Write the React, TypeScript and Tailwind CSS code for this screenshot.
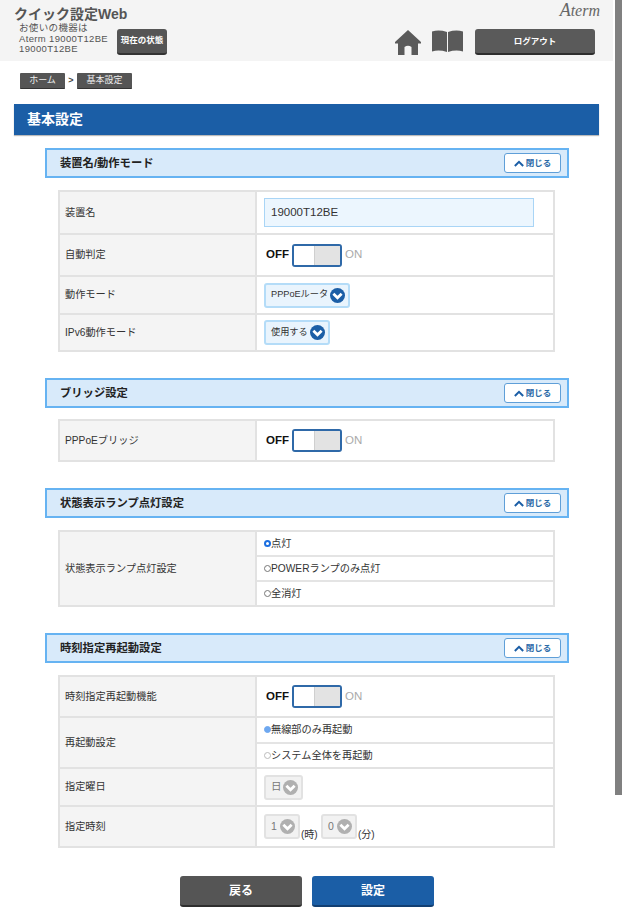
import type { ReactNode } from 'react';

function Chevron({ disabled = false }: { disabled?: boolean }) {
  return (
    <svg viewBox="0 0 16 16" className="w-[15px] h-[15px] shrink-0">
      <circle cx="8" cy="8" r="8" fill={disabled ? '#b0b0b0' : '#1b5ea6'} />
      <path d="M3.6 6.2 L8 10.4 L12.4 6.2" fill="none" stroke="#fff" strokeWidth="3" />
    </svg>
  );
}

function Select({ label, disabled = false, width }: { label: string; disabled?: boolean; width: string }) {
  return (
    <div
      className={`h-[25px] ${width} flex items-center justify-between pl-[5px] pr-[3px] rounded-[3px] border-2 whitespace-nowrap ${
        disabled ? 'bg-[#f2f2f2] border-[#e2e2e2] text-[10.5px] text-[#777]' : 'bg-[#e9f4fd] border-[#b4dcf8] text-[9.2px] text-[#333]'
      }`}
    >
      <span>{label}</span>
      <Chevron disabled={disabled} />
    </div>
  );
}

function Toggle() {
  return (
    <div className="flex items-center pl-[9px]">
      <span className="w-[26px] text-[11.5px] font-bold text-[#111]">OFF</span>
      <div className="w-[50px] h-[23px] flex rounded-[3px] border-2 border-[#2f69a8] overflow-hidden">
        <div className="w-[20px] bg-white" />
        <div className="flex-1 bg-[#e3e3e3] border-l border-[#cfcfcf]" />
      </div>
      <span className="ml-[3px] text-[11.5px] font-medium text-[#aaaaaa]">ON</span>
    </div>
  );
}

function Radio({ label, state }: { label: string; state: 'on' | 'off' | 'dimOn' | 'dimOff' }) {
  const dot = {
    on: 'bg-[#fff] border-[2.5px] border-[#1c6fe0]',
    off: 'bg-white border border-[#777]',
    dimOn: 'bg-[#6ea8f0] border border-[#6ea8f0]',
    dimOff: 'bg-white border border-[#bbb]',
  }[state];
  return (
    <div className="flex-1 flex items-center pl-[7px] text-[10.2px] text-[#333] border-b-2 border-[#e4e4e4] last:border-b-0">
      <span className={`w-[7px] h-[7px] rounded-full ${dot}`} />
      <span>{label}</span>
    </div>
  );
}

function Row({ label, height, children }: { label: string; height: string; children: ReactNode }) {
  return (
    <div className={`flex ${height} border-b-2 border-[#e2e2e2] last:border-b-0`}>
      <div className="w-[197px] shrink-0 flex items-center pl-[5px] bg-[#f4f4f4] border-r-2 border-[#e2e2e2] text-[10.2px] text-[#333]">
        {label}
      </div>
      <div className="flex-1 flex flex-col justify-center">{children}</div>
    </div>
  );
}

function Section({ title, gap, top, children }: { title: string; gap: string; top: string; children: ReactNode }) {
  return (
    <section className={`${top} ml-[45px] w-[524px]`}>
      <div className="h-[30px] flex items-center justify-between pl-[13px] pr-[6px] bg-[#d8eafa] border-2 border-[#66b3f2]">
        <h2 className="text-[11.3px] font-bold text-[#222]">{title}</h2>
        <div className="w-[57px] h-[20px] flex items-center justify-center gap-[2px] bg-white border border-[#5f9fd8] rounded-[3px] text-[8.5px] font-bold text-[#2b6aa8]">
          <svg viewBox="0 0 12 8" className="w-[10px] h-[7px]">
            <path d="M1 7 L6 2 L11 7" fill="none" stroke="#1b5ea6" strokeWidth="2.4" />
          </svg>
          閉じる
        </div>
      </div>
      <div className={`${gap} ml-[13px] w-[497px] border-2 border-[#e2e2e2] bg-white`}>{children}</div>
    </section>
  );
}

export default function App() {
  return (
    <div
      className="relative w-[624px] h-[912px] overflow-hidden bg-white"
      style={{ fontFamily: '"Liberation Sans", "Noto Sans CJK JP", sans-serif' }}
    >
      <div className="absolute top-0 left-[615px] w-[7px] h-[795px] bg-[#808080]" />

      <header className="w-[613px] h-[61px] bg-[#f4f4f4] flex justify-between">
        <div className="pl-[14px] pt-[5px]">
          <h1 className="text-[14px] leading-[18px] font-bold text-[#555]">クイック設定Web</h1>
          <div className="flex items-end pl-[5px]">
            <p className="w-[98px] text-[9.5px] leading-[10.5px] tracking-[0.35px] text-[#555]">
              お使いの機器は
              <br />
              Aterm 19000T12BE
              <br />
              19000T12BE
            </p>
            <div className="w-[50px] h-[26px] flex items-center justify-center rounded-[3px] bg-[#555] border-b-2 border-[#333] text-[8.5px] font-bold text-white">
              現在の状態
            </div>
          </div>
        </div>
        <div className="w-[238px] flex flex-col items-end pr-[12px]">
          <span
            className="h-[29px] pr-[1px] pt-[2px] leading-[16px] italic text-[#666]"
            style={{ fontFamily: '"Liberation Serif", serif' }}
          >
            <span className="text-[18px]">A</span>
            <span className="text-[16px]">term</span>
          </span>
          <div className="mr-[6px] flex items-center">
            <svg viewBox="0 0 26 25" className="w-[26px] h-[25px]">
              <path
                d="M13 0 L26 12 L26 13.5 L23 13.5 L23 25 L16.5 25 L16.5 17 Q13 14.5 9.5 17 L9.5 25 L3 25 L3 13.5 L0 13.5 L0 12 Z"
                fill="#5a5a5a"
              />
            </svg>
            <svg viewBox="0 0 31 24" className="ml-[11px] w-[31px] h-[24px]">
              <path d="M0 1.5 Q7 -0.5 15 2 L15 22 Q7 19.5 0 21.5 Z" fill="#5a5a5a" />
              <path d="M16 2 Q24 -0.5 31 1.5 L31 21.5 Q24 19.5 16 22 Z" fill="#5a5a5a" />
            </svg>
            <div className="ml-[12px] w-[120px] h-[26px] flex items-center justify-center rounded-[3px] bg-[#5a5a5a] border-b-2 border-[#2e2e2e] text-[8.5px] font-bold text-white">
              ログアウト
            </div>
          </div>
        </div>
      </header>

      <nav className="mt-[12px] ml-[20px] h-[16px] flex items-center text-[9px] text-[#eee]">
        <div className="w-[45px] h-[16px] flex items-center justify-center bg-[#555] border-b border-[#333] rounded-[1px]">
          ホーム
        </div>
        <span className="w-[12px] text-center font-bold text-[#444]">&gt;</span>
        <div className="w-[55px] h-[16px] flex items-center justify-center bg-[#555] border-b border-[#333] rounded-[1px]">
          基本設定
        </div>
      </nav>

      <div className="mt-[15px] ml-[14px] w-[585px] h-[31px] flex items-center pl-[13px] bg-[#1b5ea6] shadow-[0_1px_1px_#bbb] text-[14px] font-bold text-white">
        基本設定
      </div>

      <Section title="装置名/動作モード" top="mt-[13px]" gap="mt-[12px]">
        <Row label="装置名" height="h-[43px]">
          <div className="ml-[7px] w-[270px] h-[29px] flex items-center pl-[6px] bg-[#ecf6fe] border border-[#a9d5f6] text-[11.5px] text-[#333]">
            19000T12BE
          </div>
        </Row>
        <Row label="自動判定" height="h-[42px]">
          <Toggle />
        </Row>
        <Row label="動作モード" height="h-[38px]">
          <div className="ml-[7px]">
            <Select label="PPPoEルータ" width="w-[86px]" />
          </div>
        </Row>
        <Row label="IPv6動作モード" height="h-[35px]">
          <div className="ml-[7px]">
            <Select label="使用する" width="w-[66px]" />
          </div>
        </Row>
      </Section>

      <Section title="ブリッジ設定" top="mt-[26px]" gap="mt-[11px]">
        <Row label="PPPoEブリッジ" height="h-[39px]">
          <Toggle />
        </Row>
      </Section>

      <Section title="状態表示ランプ点灯設定" top="mt-[26px]" gap="mt-[12px]">
        <Row label="状態表示ランプ点灯設定" height="h-[73px]">
          <Radio label="点灯" state="on" />
          <Radio label="POWERランプのみ点灯" state="off" />
          <Radio label="全消灯" state="off" />
        </Row>
      </Section>

      <Section title="時刻指定再起動設定" top="mt-[26px]" gap="mt-[12px]">
        <Row label="時刻指定再起動機能" height="h-[41px]">
          <Toggle />
        </Row>
        <Row label="再起動設定" height="h-[51px]">
          <Radio label="無線部のみ再起動" state="dimOn" />
          <Radio label="システム全体を再起動" state="dimOff" />
        </Row>
        <Row label="指定曜日" height="h-[38px]">
          <div className="ml-[7px]">
            <Select label="日" disabled width="w-[39px]" />
          </div>
        </Row>
        <Row label="指定時刻" height="h-[39px]">
          <div className="ml-[7px] flex items-end text-[10px] text-[#333]">
            <Select label="1" disabled width="w-[36px]" />
            <span className="w-[21px] pl-[1px] translate-y-[3px]">(時)</span>
            <Select label="0" disabled width="w-[36px]" />
            <span className="pl-[1px] translate-y-[3px]">(分)</span>
          </div>
        </Row>
      </Section>

      <div className="mt-[28px] ml-[180px] flex gap-[10px]">
        <div className="w-[122px] h-[31px] flex items-center justify-center rounded-[3px] bg-[#555] border-b-2 border-[#2e2e2e] text-[12px] font-bold text-white">
          戻る
        </div>
        <div className="w-[122px] h-[31px] flex items-center justify-center rounded-[3px] bg-[#1b5ea6] border-b-2 border-[#123f72] text-[12px] font-bold text-white">
          設定
        </div>
      </div>
    </div>
  );
}
